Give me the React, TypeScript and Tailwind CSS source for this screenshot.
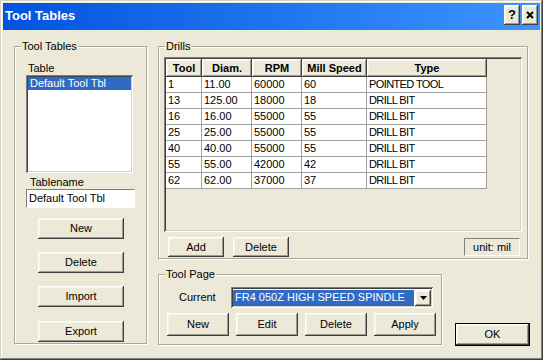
import React from "react"

const raised =
  "bg-[#ECE9D8] shadow-[inset_-1px_-1px_#404040,inset_1px_1px_#fff,inset_-2px_-2px_#9D9B8E,inset_2px_2px_#F5F4EE]"
const sunken =
  "shadow-[inset_1px_1px_#808080,inset_-1px_-1px_#fff,inset_2px_2px_#404040,inset_-2px_-2px_#D4D0C8]"

const rows = [
  ["1", "11.00", "60000", "60", "POINTED TOOL"],
  ["13", "125.00", "18000", "18", "DRILL BIT"],
  ["16", "16.00", "55000", "55", "DRILL BIT"],
  ["25", "25.00", "55000", "55", "DRILL BIT"],
  ["40", "40.00", "55000", "55", "DRILL BIT"],
  ["55", "55.00", "42000", "42", "DRILL BIT"],
  ["62", "62.00", "37000", "37", "DRILL BIT"]
]

const cols = [
  { name: "Tool", w: "w-[36px]" },
  { name: "Diam.", w: "w-[50px]" },
  { name: "RPM", w: "w-[50px]" },
  { name: "Mill Speed", w: "w-[65px]" },
  { name: "Type", w: "w-[120px]" }
]

const Btn: React.FC<{ className?: string; children: React.ReactNode }> = ({
  className = "",
  children
}) => (
  <div
    className={`flex shrink-0 items-center justify-center text-[11px] leading-[13px] text-black ${raised} ${className}`}>
    {children}
  </div>
)

const Group: React.FC<{
  label: string
  className?: string
  children: React.ReactNode
}> = ({ label, className = "", children }) => (
  <div
    className={`relative shrink-0 border border-[#ACA899] shadow-[inset_1px_1px_#fff,1px_1px_#fff] ${className}`}>
    <span className="absolute -top-[7px] left-[6px] bg-[#ECE9D8] px-[1px] text-[11px] leading-[13px]">
      {label}
    </span>
    {children}
  </div>
)

const DrillGrid: React.FC = () => (
  <div className={`ml-[5px] mt-[10px] flex h-[175px] w-[358px] flex-col bg-[#ECE9D8] p-[2px] ${sunken}`}>
    <div className="flex h-[18px]">
      {cols.map((c) => (
        <div
          key={c.name}
          className={`flex items-center justify-center text-[11px] font-bold leading-[13px] ${c.w} ${raised}`}>
          {c.name}
        </div>
      ))}
    </div>
    {rows.map((r, i) => (
      <div key={i} className="flex h-[16px]">
        {r.map((v, j) => (
          <div
            key={j}
            className={`border-b border-r border-[#A0A0A0] bg-white pl-[2px] text-[11px] leading-[15px] ${cols[j].w} ${
              j === 4 ? "tracking-[-0.6px]" : ""
            }`}>
            {v}
          </div>
        ))}
      </div>
    ))}
  </div>
)

export default function App() {
  return (
    <div className="flex h-[360px] w-[543px] flex-col bg-[#ECE9D8] p-[3px] font-['Liberation_Sans',Arial,sans-serif] text-black shadow-[inset_-1px_-1px_#404040,inset_1px_1px_#D4D0C8,inset_-2px_-2px_#808080,inset_2px_2px_#fff]">
      {/* title bar */}
      <div className="flex h-[27px] shrink-0 items-start bg-linear-to-r from-[#0353DF] via-[#1E74EE] to-[#3D95FF] pl-[2px] pt-[2px]">
        <span className="mt-[3px] text-[13px] font-bold leading-[16px] text-white">
          Tool Tables
        </span>
        <div className="ml-auto mr-[2px] flex gap-[2px]">
          <div className={`flex h-[20px] w-[16px] items-center justify-center text-[13px] font-bold ${raised}`}>
            ?
          </div>
          <div className={`flex h-[20px] w-[16px] items-center justify-center ${raised}`}>
            <svg width="8" height="8" viewBox="0 0 8 8">
              <path d="M1 1L7 7M7 1L1 7" stroke="#000" strokeWidth="2" />
            </svg>
          </div>
        </div>
      </div>

      {/* body */}
      <div className="flex gap-[11px] pl-[11px] pt-[16px]">
        <Group label="Tool Tables" className="flex h-[298px] w-[133px] flex-col">
          <div className="ml-[13px] mt-[15px] h-[13px] text-[11px] leading-[13px]">Table</div>
          <div className={`ml-[11px] h-[98px] w-[107px] bg-white p-[2px] ${sunken}`}>
            <div className="bg-[#316AC5] pl-[2px] text-[11px] leading-[13px] text-white">
              Default Tool Tbl
            </div>
          </div>
          <div className="ml-[15px] mt-[3px] h-[13px] text-[11px] leading-[13px]">Tablename</div>
          <div className="ml-[11px] flex h-[19px] w-[109px] items-center border border-[#7F7F7F] border-b-white border-r-white bg-white pl-[2px] text-[11px] leading-[13px]">
            Default Tool Tbl
          </div>
          <div className="ml-[23px] mt-[10px] flex flex-col gap-[13px]">
            <Btn className="h-[21px] w-[86px]">New</Btn>
            <Btn className="h-[21px] w-[86px]">Delete</Btn>
            <Btn className="h-[21px] w-[86px]">Import</Btn>
            <Btn className="mt-[1px] h-[21px] w-[86px]">Export</Btn>
          </div>
        </Group>

        <div className="flex w-[372px] flex-col">
          <Group label="Drills" className="flex h-[213px] w-[370px] flex-col">
            <DrillGrid />
            <div className="mt-[5px] flex items-start pl-[9px] pr-[7px]">
              <Btn className="h-[20px] w-[56px]">Add</Btn>
              <Btn className="ml-[9px] h-[20px] w-[56px]">Delete</Btn>
              <div className="ml-auto mt-[1px] flex h-[18px] w-[56px] items-center justify-center border border-[#808080] border-b-white border-r-white text-[11px] leading-[13px]">
                unit: mil
              </div>
            </div>
          </Group>

          <div className="mt-[15px] flex items-start">
            <Group label="Tool Page" className="h-[71px] w-[284px]">
              <div className="mt-[12px] flex items-center">
                <span className="ml-[20px] w-[52px] text-[11px] leading-[13px]">Current</span>
                <div className={`flex h-[21px] w-[202px] items-center bg-white p-[2px] ${sunken}`}>
                  <div className="flex h-[16px] flex-1 items-center bg-[#316AC5] pl-[2px] text-[11px] leading-[13px] text-white">
                    FR4 050Z HIGH SPEED SPINDLE
                  </div>
                  <div className={`ml-[1px] flex h-[16px] w-[16px] items-center justify-center ${raised}`}>
                    <svg width="7" height="4" viewBox="0 0 7 4">
                      <path d="M0 0H7L3.5 4Z" fill="#000" />
                    </svg>
                  </div>
                </div>
              </div>
              <div className="ml-[8px] mt-[5px] flex gap-[7px]">
                <Btn className="h-[23px] w-[62px]">New</Btn>
                <Btn className="h-[23px] w-[62px]">Edit</Btn>
                <Btn className="h-[23px] w-[62px]">Delete</Btn>
                <Btn className="h-[23px] w-[62px]">Apply</Btn>
              </div>
            </Group>
            <Btn className="ml-[13px] mt-[49px] h-[23px] w-[75px] border border-black">OK</Btn>
          </div>
        </div>
      </div>
    </div>
  )
}
